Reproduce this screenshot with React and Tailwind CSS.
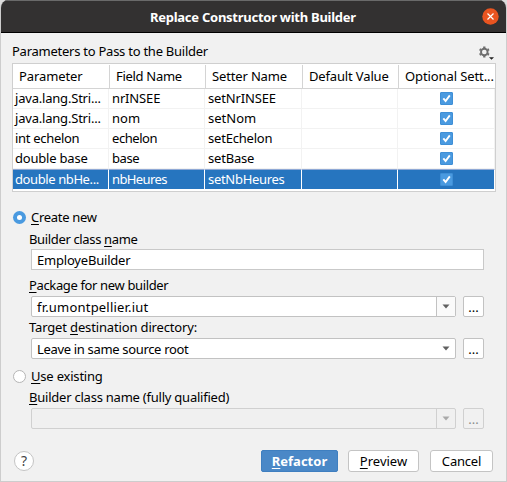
import React from "react";

const ROWS = [
  ["java.lang.Stri...", "nrINSEE", "setNrINSEE"],
  ["java.lang.Stri...", "nom", "setNom"],
  ["int echelon", "echelon", "setEchelon"],
  ["double base", "base", "setBase"],
  ["double nbHe...", "nbHeures", "setNbHeures"],
];

const TRACKING = {
  "java.lang.Stri...": "tracking-[-0.2px]",
  "int echelon": "tracking-[-0.3px]",
  "double base": "tracking-[-0.2px]",
  "double nbHe...": "tracking-[-0.4px]",
  nrINSEE: "tracking-[-0.15px]",
  echelon: "tracking-[-0.45px]",
  base: "tracking-[-0.4px]",
  nbHeures: "tracking-[-0.6px]",
  setNrINSEE: "tracking-[-0.15px]",
  setEchelon: "tracking-[-0.2px]",
  setBase: "tracking-[-0.2px]",
  setNbHeures: "tracking-[-0.3px]",
};

function Key({ children }) {
  return <span className="underline underline-offset-2 decoration-1">{children}</span>;
}

function Gear() {
  return (
    <svg width="17" height="16" viewBox="0 0 17 16" className="mt-[12px] ml-auto block">
      <g stroke="#6e6e6e" fill="none">
        <circle cx="6.3" cy="7" r="3.3" strokeWidth="1.9" />
        <path
          d="M6.3 1.6v1.6M6.3 10.8v1.6M1.62 4.3l1.39.8M9.59 8.9l1.39.8M1.62 9.7l1.39-.8M9.59 5.1l1.39-.8"
          strokeWidth="2.3"
        />
      </g>
      <path d="M11 12.2h5l-2.5 2.5z" fill="#222" />
    </svg>
  );
}

function Check() {
  return (
    <svg width="13" height="13" viewBox="0 0 13 13" className="block">
      <rect x="0.5" y="0.5" width="12" height="12" rx="0.5" fill="#4a9ae0" stroke="#3f8fd6" />
      <path d="M3.3 6.4 5.6 9 9.8 3.4" fill="none" stroke="#fff" strokeWidth="1.9" />
    </svg>
  );
}

function Arrow({ color }) {
  return (
    <svg width="8" height="5" viewBox="0 0 8 5" className="block">
      <path d="M0.5 0.5h7L4 4.6z" fill={color} />
    </svg>
  );
}

function Label({ children, className }) {
  return <div className={`flex shrink-0 items-center whitespace-pre pl-[28px] ${className}`}><span>{children}</span></div>;
}

function Combo({ text, tracking, disabled, split }) {
  return (
    <div className="ml-[30px] flex h-[21px] shrink-0 gap-[7px]">
      <div className={`flex w-[425px] rounded-[2px] border ${disabled ? "border-[#d0d0d0] bg-[#f0f0f0]" : "border-[#c2c2c2] bg-white"}`}>
        <div className="flex flex-1 items-center pl-[5px]"><span className={`whitespace-pre ${tracking || ""}`}>{text}</span></div>
        <div className={`flex w-[19px] items-center justify-center ${split ? "border-l" : "pl-px"} ${disabled ? "border-[#d0d0d0]" : split ? "border-[#c2c2c2] bg-[#fafafa]" : ""}`}>
          <Arrow color={disabled ? "#a9a9a9" : "#606060"} />
        </div>
      </div>
      <div className={`flex w-[21px] items-center justify-center rounded-[2px] border ${disabled ? "border-[#d0d0d0] text-[#8c8c8c]" : "border-[#c2c2c2] bg-white"}`}>...</div>
    </div>
  );
}

export default function App() {
  return (
    <div className="h-[482px] w-[507px] overflow-hidden bg-[#dcdcdc] font-['Noto_Sans','Open_Sans',sans-serif] text-[13px] leading-[18px] text-black">
      <div className="flex h-[482px] w-[507px] flex-col overflow-hidden rounded-t-[8px] border border-t-0 border-[#cdcdcd] bg-[#f1f1f1]">
        <header className="flex h-[33px] shrink-0 items-center border-t border-b border-t-[#6a6a6a] border-b-black bg-[#333131] pr-[7px] pl-[149px] font-bold text-white">
          <span className="tracking-[-0.26px] whitespace-nowrap">Replace Constructor with Builder</span>
          <svg width="17" height="17" viewBox="0 0 17 17" className="ml-auto shrink-0">
            <circle cx="8.5" cy="8.5" r="8.2" fill="#e95420" />
            <path d="m5.5 5.5 6 6m0-6-6 6" stroke="#fff" strokeWidth="1.2" />
          </svg>
        </header>

        <div className="flex h-[30px] shrink-0 items-start pr-[11px] pl-[11px]">
          <span className="pt-[9px] tracking-[-0.25px]">Parameters to Pass to the Builder</span>
          <Gear />
        </div>

        <div className="ml-[11px] flex h-[129px] w-[484px] shrink-0 flex-col border border-[#cfcfcf] bg-white">
          <div className="grid h-[25px] shrink-0 grid-cols-[97px_96px_97px_96px_96px] border-b border-[#d4d4d4] leading-[23px] whitespace-nowrap">
            <div className="my-px border-r border-[#d4d4d4] pl-[6px]"><span className="tracking-[-0.1px]">Parameter</span></div>
            <div className="my-px border-r border-[#d4d4d4] pl-[6px] tracking-[-0.3px]">Field Name</div>
            <div className="my-px border-r border-[#d4d4d4] pl-[6px] tracking-[-0.15px]">Setter Name</div>
            <div className="my-px border-r border-[#d4d4d4] pl-[6px] tracking-[-0.15px]">Default Value</div>
            <div className="my-px pl-[6px] tracking-[-0.1px]">Optional Sett...</div>
          </div>
          {ROWS.map((row, i) => {
            const sel = i === 4;
            const cell = sel
              ? "border-r border-t border-r-white border-t-[#8fa9d6] bg-[#2675bf] text-white leading-[18px]"
              : "border-r border-b border-[#f2f2f2] leading-[19px]";
            return (
              <div key={i} className="grid h-[20px] shrink-0 grid-cols-[96px_96px_97px_96px_97px]">
                {[0, 1, 2].map((c) => (
                  <div key={c} className={`whitespace-pre ${c === 0 ? "pl-[2px]" : "pl-[3px]"} ${cell}`}>
                    <span className={TRACKING[row[c]]}>{row[c]}</span>
                  </div>
                ))}
                <div className={cell} />
                <div className={`flex items-center pl-[42px] ${cell}`}><Check /></div>
              </div>
            );
          })}
        </div>

        <div className="mt-[15px] flex h-[20px] shrink-0 items-center gap-[5px] pl-[12px]">
          <span className="flex size-[13px] items-center justify-center rounded-full bg-[#4a9ae0]"><span className="size-[5px] rounded-full bg-white" /></span>
          <span className="tracking-[-0.3px]"><Key>C</Key>reate new</span>
        </div>
        <Label className="mt-[2px] h-[20px] tracking-[-0.35px]">Builder class <Key>n</Key>ame</Label>
        <div className="ml-[30px] flex h-[21px] w-[453px] shrink-0 items-center border border-[#c9c9c9] bg-white pl-[5px] tracking-[-0.2px]">EmployeBuilder</div>
        <Label className="mt-[5px] mb-px h-[20px] tracking-[-0.36px]"><Key>P</Key>ackage for new builder</Label>
        <Combo text="fr.umontpellier.iut" tracking="tracking-[0.2px]" split />
        <Label className="mb-px h-[20px] tracking-[-0.15px]">Target <Key>d</Key>estination directory:</Label>
        <Combo text="Leave in same source root" tracking="tracking-[-0.33px]" />
        <div className="mt-[6px] flex h-[22px] shrink-0 items-center gap-[5px] pl-[12px]">
          <span className="size-[13px] rounded-full border border-[#b5b5b5] bg-white" />
          <span className="tracking-[-0.2px]"><Key>U</Key>se existing</span>
        </div>
        <Label className="mb-px h-[20px] tracking-[-0.23px]"><Key>B</Key>uilder class name (fully qualified)</Label>
        <Combo text="" split disabled />

        <footer className="mt-[21px] flex h-[22px] shrink-0 items-center pl-[13px]">
          <span className="flex size-[20px] items-center justify-center rounded-full border border-[#c4c4c4] bg-white text-[14px] text-[#444]">?</span>
          <span className="ml-[227px] flex h-[22px] w-[77px] items-center justify-center rounded-[2px] border border-[#3f7fc0] bg-[#4a88c7] font-bold text-white"><span><Key>R</Key>efactor</span></span>
          <span className="ml-[10px] flex h-[22px] w-[71px] items-center justify-center rounded-[3px] border border-[#c4c4c4] bg-white"><span><Key>P</Key>review</span></span>
          <span className="ml-[11px] flex h-[22px] w-[63px] items-center justify-center rounded-[3px] border border-[#c4c4c4] bg-white tracking-[-0.2px]">Cancel</span>
        </footer>
      </div>
    </div>
  );
}
